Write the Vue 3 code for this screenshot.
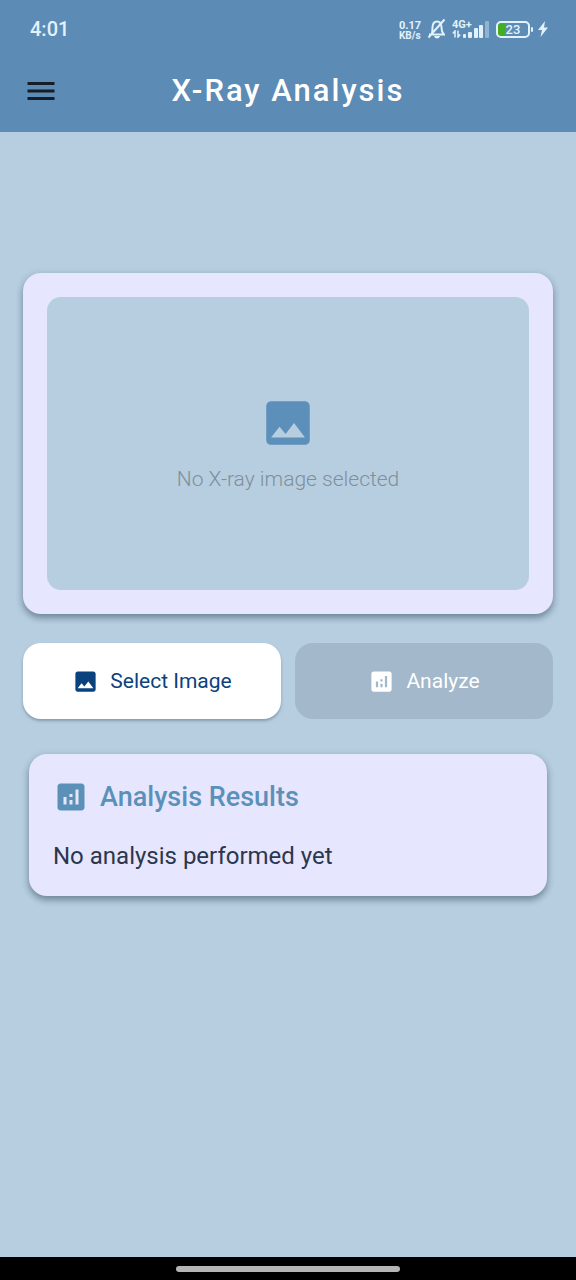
<script setup>
import { ref } from 'vue'

const imagePath = 'M21 19V5c0-1.1-.9-2-2-2H5c-1.1 0-2 .9-2 2v14c0 1.1.9 2 2 2h14c1.1 0 2-.9 2-2zM8.5 13.5l2.5 3.01L14.5 12l4.5 6H5l3.5-4.5z'
const analyticsPath = 'M19 3H5c-1.1 0-2 .9-2 2v14c0 1.1.9 2 2 2h14c1.1 0 2-.9 2-2V5c0-1.1-.9-2-2-2zM9 17H7v-5h2v5zm4 0h-2v-3h2v3zm0-5h-2v-2h2v2zm4 5h-2V7h2v10z'
const hasImage = ref(false)
</script>

<template>
  <div class="screen">
    <header class="top">
      <div class="status">
        <span class="time">4:01</span>
        <div class="indicators">
          <div class="speed"><span>0.17</span><span>KB/s</span></div>
          <svg class="bell" viewBox="0 0 20 22" aria-hidden="true">
            <path d="M2 16.500h16M4.500 16c1.300-2 .8-4 1-7C5.800 5.500 7.500 3.500 10 3.500s4.200 2 4.500 5.500c.2 3 0 5 2 7M1.500 19.500 17.500 1.500" />
            <path class="solid" d="M7 18h6c-.5 1.700-1.500 2.500-3 2.500S7.500 19.700 7 18z" />
          </svg>
          <div class="network">
            <span>4G+</span>
            <svg class="arrows" viewBox="0 0 9 8" aria-hidden="true">
              <path d="M3 7.500V1L.8 3.500M6 .5V7l2.200-2.500" />
            </svg>
          </div>
          <svg class="signal" viewBox="0 0 26 17" aria-hidden="true">
            <rect x="0" y="13" width="3" height="4" rx="1" />
            <rect x="5" y="11" width="4" height="6" rx="1" />
            <rect x="11" y="7" width="4" height="10" rx="1" />
            <rect x="16" y="4" width="4" height="13" rx="1" />
            <rect class="faint" x="22" y="0" width="4" height="17" rx="1" />
          </svg>
          <div class="battery"><div class="cell">23</div><i class="tip"></i></div>
          <svg class="bolt" viewBox="0 0 10 16" aria-hidden="true">
            <path d="M7 0 0 9h4L2.500 16 10 6.500H6z" />
          </svg>
        </div>
      </div>
      <div class="bar">
        <button class="menu" type="button" aria-label="Open menu">
          <svg viewBox="0 0 24 24" aria-hidden="true"><path d="M3 18h18v-2H3v2zm0-5h18v-2H3v2zm0-7v2h18V6H3z" /></svg>
        </button>
        <h1>X-Ray Analysis</h1>
      </div>
    </header>

    <main>
      <section class="card preview">
        <div class="placeholder">
          <svg viewBox="0 0 24 24" aria-hidden="true"><path :d="imagePath" /></svg>
          <p>No X-ray image selected</p>
        </div>
      </section>

      <div class="actions">
        <button class="action select" type="button">
          <svg viewBox="0 0 24 24" aria-hidden="true"><path :d="imagePath" /></svg>
          <span>Select Image</span>
        </button>
        <button class="action analyze" type="button" :disabled="!hasImage">
          <svg viewBox="0 0 24 24" aria-hidden="true"><path :d="analyticsPath" /></svg>
          <span>Analyze</span>
        </button>
      </div>

      <section class="card results">
        <h2>
          <svg viewBox="0 0 24 24" aria-hidden="true"><path :d="analyticsPath" /></svg>
          <span>Analysis Results</span>
        </h2>
        <p>No analysis performed yet</p>
      </section>
    </main>

    <footer class="nav"><i class="handle"></i></footer>
  </div>
</template>

<style>
body {
  margin: 0;
}
</style>

<style scoped>
* {
  box-sizing: border-box;
}
h1,
h2,
p {
  margin: 0;
}
svg {
  display: block;
  flex: none;
  fill: currentColor;
}
.screen {
  display: flex;
  flex-direction: column;
  min-height: 100vh;
  background: #b7cee0;
  font-family: Roboto, "Liberation Sans", sans-serif;
}
.top {
  background: #5c8bb5;
}
.status {
  display: flex;
  align-items: center;
  justify-content: space-between;
  height: 58px;
  padding: 0 28px 0 30px;
  color: #e3f1fb;
}
.time {
  font-size: 20px;
  font-weight: 500;
  line-height: 24px;
}
.indicators {
  display: flex;
  align-items: center;
}
.speed {
  display: flex;
  flex-direction: column;
  width: 23px;
  padding-top: 4px;
  font-size: 11px;
  font-weight: 700;
  line-height: 10px;
  white-space: nowrap;
}
.speed span + span {
  font-size: 10px;
}
.bell {
  width: 20px;
  height: 22px;
  margin-left: 5px;
}
.bell path {
  fill: none;
  stroke: currentColor;
  stroke-width: 2;
}
.bell .solid {
  fill: currentColor;
  stroke: none;
}
.network {
  width: 11px;
  margin-left: 5px;
  font-size: 11px;
  font-weight: 700;
  line-height: 10px;
  white-space: nowrap;
}
.network span {
  display: block;
}
.arrows {
  width: 9px;
  height: 8px;
}
.arrows path {
  fill: none;
  stroke: currentColor;
  stroke-width: 1.5;
}
.signal {
  width: 26px;
  height: 17px;
}
.faint {
  opacity: 0.4;
}
.battery {
  display: flex;
  align-items: center;
  gap: 1px;
  margin-left: 7px;
}
.cell {
  width: 34px;
  height: 17px;
  border: 2px solid #e3f1fb;
  border-radius: 5px;
  background: linear-gradient(90deg, #43ad26 7px, transparent 7px);
  font-size: 13px;
  font-weight: 500;
  line-height: 14px;
  text-align: center;
}
.tip {
  width: 2px;
  height: 5px;
  border-radius: 1px;
  background: #e3f1fb;
}
.bolt {
  width: 10px;
  height: 16px;
  margin-left: 5px;
}
.bar {
  display: grid;
  grid-template-columns: 36px 1fr 36px;
  align-items: center;
  height: 74px;
  padding: 0 23px 8px;
}
.menu {
  padding: 0;
  border: 0;
  background: none;
  color: #171d26;
}
.menu svg {
  width: 36px;
  height: 36px;
}
h1 {
  color: #fff;
  font-size: 31px;
  font-weight: 500;
  line-height: 40px;
  letter-spacing: 2px;
  text-align: center;
}
main {
  flex: 1;
  padding: 141px 23px 24px;
}
.card {
  border-radius: 18px;
  background: #e6e6fe;
  box-shadow: 0 4px 6px rgba(40, 60, 80, 0.4), 0 2px 8px rgba(40, 60, 80, 0.16);
}
.preview {
  padding: 24px;
}
.placeholder {
  display: flex;
  flex-direction: column;
  align-items: center;
  justify-content: center;
  gap: 12px;
  min-height: 293px;
  border-radius: 14px;
  background: #b7cee0;
  color: #7f909b;
  font-size: 21px;
  font-weight: 300;
  line-height: 30px;
}
.placeholder svg {
  width: 58px;
  height: 58px;
  color: #5c8fba;
}
.actions {
  display: grid;
  grid-template-columns: 1fr 1fr;
  gap: 14px;
  margin: 29px 0 35px;
}
.action {
  display: flex;
  align-items: center;
  justify-content: center;
  gap: 11px;
  min-height: 76px;
  padding: 0;
  border: 0;
  border-radius: 18px;
  font-family: inherit;
  font-size: 21px;
  font-weight: 400;
  line-height: 24px;
}
.action svg {
  width: 27px;
  height: 27px;
}
.select {
  background: #fff;
  color: #0b427d;
  box-shadow: 0 2px 3px rgba(40, 60, 80, 0.35);
}
.analyze {
  background: #a3b8ca;
  color: #fff;
}
.results {
  margin: 0 6px;
  padding: 24px;
}
h2 {
  display: flex;
  align-items: center;
  gap: 11px;
  color: #5b91b8;
  font-size: 27px;
  font-weight: 500;
  line-height: 38px;
}
h2 svg {
  width: 36px;
  height: 36px;
}
.results p {
  margin-top: 24px;
  color: #2c364c;
  font-size: 24px;
  line-height: 32px;
}
.nav {
  display: flex;
  align-items: center;
  justify-content: center;
  height: 23px;
  background: #000;
}
.handle {
  width: 39%;
  height: 6px;
  border-radius: 3px;
  background: #b5b5b5;
}
</style>
